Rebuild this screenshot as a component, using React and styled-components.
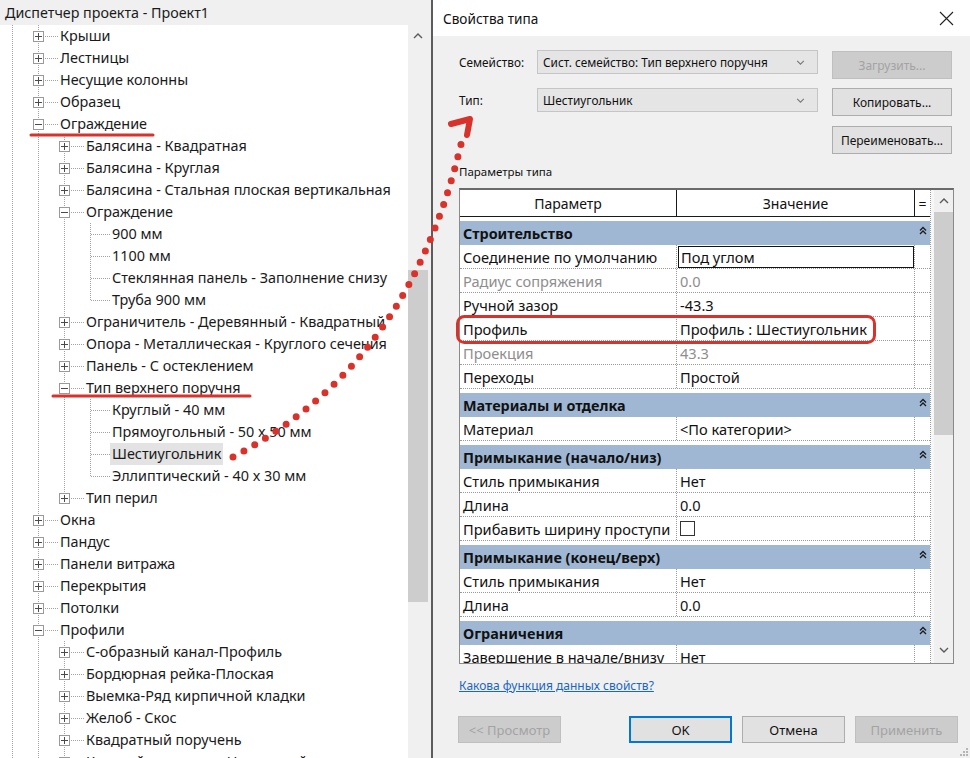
import React from 'react';
import styled, { createGlobalStyle } from 'styled-components';

const UI_FONT = '"Noto Sans", "Liberation Sans", sans-serif';
const RED = '#d8322a';

const GlobalStyle = createGlobalStyle`
  html, body { margin: 0; padding: 0; }
  body {
    width: 970px;
    height: 758px;
    overflow: hidden;
    background: #f0f0f0;
    font-family: ${UI_FONT};
    color: #000;
  }
`;

const Screen = styled.div`
  position: relative;
  display: flex;
  width: 970px;
  height: 758px;
  overflow: hidden;
`;

/* ---------- project browser (left) ---------- */

const Browser = styled.section`
  width: 431px;
  flex: none;
  display: flex;
  flex-direction: column;
  background: #f0f0f0;
`;

const BrowserTitle = styled.div`
  height: 25px;
  padding: 1px 0 0 5px;
  box-sizing: border-box;
  font-size: 14.3px;
  line-height: 24px;
  color: #1b1b1b;
  white-space: nowrap;
`;

const BrowserBody = styled.div`
  flex: 1;
  display: flex;
  min-height: 0;
`;

const Tree = styled.div`
  width: 408px;
  flex: none;
  background: #fff;
  overflow: hidden;
`;

const dotV = (x, h) =>
  `repeating-linear-gradient(to bottom, #a2a2a2 0 1px, transparent 1px 2px) ${x}px 0 / 1px ${h} no-repeat`;
const dotH = (x, y, w) =>
  `repeating-linear-gradient(to right, #a2a2a2 0 1px, transparent 1px 2px) ${x}px ${y}px / ${w}px 1px no-repeat`;

const Row = styled.div`
  display: flex;
  height: 22px;
  white-space: nowrap;
`;

const Guide = styled.div`
  width: 26px;
  flex: none;
  background: ${dotV(12, '100%')};
`;

const Connector = styled.div`
  width: 32px;
  flex: none;
  display: flex;
  align-items: center;
  background: ${({ $last }) => dotV(12, $last ? '11px' : '100%')},
    ${dotH(13, 11, 19)};
`;

const ExpBox = styled.div`
  width: 11px;
  height: 11px;
  margin-left: 7px;
  box-sizing: border-box;
  border: 1px solid #9a9a9a;
  background: #fff;
  display: flex;

  svg { display: block; }
`;

const Label = styled.span`
  padding: 0 2px;
  font-size: 14.4px;
  line-height: 22px;
  color: #1a1a1a;
  background: ${({ $selected }) => ($selected ? '#e3e3e3' : 'transparent')};
`;

const VScroll = styled.div`
  width: ${({ $w }) => $w}px;
  flex: none;
  display: flex;
  flex-direction: column;
  align-items: center;
  background: #f0f0f0;
`;

const ArrowCell = styled.div`
  height: ${({ $h }) => $h}px;
  width: 100%;
  flex: none;
  display: flex;
  align-items: center;
  justify-content: center;
`;

const Thumb = styled.div`
  width: ${({ $w }) => $w}px;
  background: #cdcdcd;
  flex: none;
`;

const Spacer = styled.div`
  flex: 1;
`;

/* ---------- type properties dialog (right) ---------- */

const Dialog = styled.section`
  flex: 1;
  display: flex;
  flex-direction: column;
  border-left: 2px solid #5c5c5c;
  background: #f0f0f0;
  font-size: 12px;
`;

const TitleBar = styled.div`
  height: 36px;
  flex: none;
  background: #fff;
  display: flex;
  align-items: center;
  justify-content: space-between;
  padding: 0 16px 0 10px;
  font-size: 13.6px;
  color: #111;
`;

const FormGrid = styled.div`
  display: grid;
  grid-template-columns: 64px 281px 120px;
  grid-auto-rows: 28px;
  column-gap: 14px;
  row-gap: 10px;
  margin: 14px 0 0 26px;
`;

const FieldLabel = styled.div`
  font-size: 11.8px;
  line-height: 24px;
  color: #111;
  white-space: nowrap;
`;

const Combo = styled.div`
  height: 24px;
  box-sizing: border-box;
  display: flex;
  align-items: center;
  justify-content: space-between;
  padding: 0 12px 0 5px;
  background: #e5e5e5;
  border: 1px solid #c5c5c5;
  font-size: 11.8px;
  color: #111;
  white-space: nowrap;
`;

const Button = styled.button`
  height: ${({ $h }) => $h || 28}px;
  width: ${({ $w }) => $w || 120}px;
  margin: 0;
  margin-top: ${({ $top }) => $top || 0}px;
  padding: 0;
  box-sizing: border-box;
  font-family: ${UI_FONT};
  font-size: ${({ $fs }) => $fs || 12}px;
  color: ${({ disabled }) => (disabled ? '#a3a3a3' : '#111')};
  background: ${({ disabled }) => (disabled ? '#cccccc' : '#e1e1e1')};
  border: ${({ disabled, $primary }) =>
    $primary ? '2px solid #0078d7' : disabled ? '1px solid #bfbfbf' : '1px solid #adadad'};
`;

const Caption = styled.div`
  margin: 10px 0 0 26px;
  font-size: 11.5px;
  line-height: 16px;
  color: #111;
`;

const Frame = styled.div`
  margin: 8px 0 0 26px;
  width: 495px;
  height: 476px;
  box-sizing: border-box;
  display: flex;
  border: 1px solid #8a8a8a;
  border-top: 2px solid #6a6a6a;
  background: #f7f7f7;
`;

const Table = styled.div`
  width: 471px;
  flex: none;
  overflow: hidden;
  background: #fff;
  border-right: 1px dotted #9a9a9a;
  box-sizing: border-box;
`;

const HeadRow = styled.div`
  display: grid;
  grid-template-columns: 217px 238px 15px;
  height: 27px;
  border-bottom: 1px solid #1a1a1a;
  box-sizing: border-box;
`;

const HeadCell = styled.div`
  display: flex;
  align-items: center;
  justify-content: center;
  font-size: 14px;
  color: #111;
  border-right: ${({ $noBorder }) => ($noBorder ? 'none' : '1px solid #1a1a1a')};
`;

const GroupRow = styled.div`
  height: 28px;
  padding-top: 4px;
  box-sizing: border-box;
`;

const GroupBand = styled.div`
  height: 24px;
  display: flex;
  align-items: center;
  justify-content: space-between;
  padding: 0 3px;
  background: #9fb7d3;
  font-size: 14.4px;
  font-weight: 700;
  color: #111;

  svg { align-self: flex-start; margin-top: 5px; }
`;

const DataRow = styled.div`
  display: grid;
  grid-template-columns: 217px 238px 15px;
  height: 24px;
  box-sizing: border-box;
  border-bottom: 1px dotted #9a9a9a;
`;

const Cell = styled.div`
  display: flex;
  align-items: center;
  padding-left: 3px;
  font-size: 14.6px;
  white-space: nowrap;
  overflow: hidden;
  color: ${({ $muted }) => ($muted ? '#8e8e8e' : '#111')};
  border-right: ${({ $noBorder }) => ($noBorder ? 'none' : '1px dotted #9a9a9a')};
`;

const EditBox = styled.div`
  flex: 1;
  align-self: stretch;
  margin: 1px 0 0 -2px;
  padding-left: 2px;
  display: flex;
  align-items: center;
  border: 1px solid #111;
  background: #fff;
`;

const CheckBox = styled.div`
  width: 15px;
  height: 15px;
  box-sizing: border-box;
  border: 1px solid #333;
  background: #fff;
`;

const HelpLink = styled.a`
  margin: 14px 0 0 26px;
  font-size: 12px;
  line-height: 16px;
  color: #1a66c2;
  text-decoration: underline;
`;

const ButtonBar = styled.div`
  display: flex;
  gap: 10px;
  margin: 22px 0 0 25px;

  & > button:first-child { margin-right: 58px; }
`;

const Grip = styled.div`
  display: flex;
  justify-content: flex-end;
  padding-right: 2px;
  margin-top: 3px;
`;

const Overlay = styled.svg`
  position: absolute;
  left: 0;
  top: 0;
  pointer-events: none;
`;

/* ---------- data ---------- */

const treeItems = [
  { level: 1, type: 'plus', text: 'Крыши' },
  { level: 1, type: 'plus', text: 'Лестницы' },
  { level: 1, type: 'plus', text: 'Несущие колонны' },
  { level: 1, type: 'plus', text: 'Образец' },
  { level: 1, type: 'minus', text: 'Ограждение' },
  { level: 2, type: 'plus', text: 'Балясина - Квадратная' },
  { level: 2, type: 'plus', text: 'Балясина - Круглая' },
  { level: 2, type: 'plus', text: 'Балясина - Стальная плоская вертикальная' },
  { level: 2, type: 'minus', text: 'Ограждение' },
  { level: 3, type: 'leaf', text: '900 мм' },
  { level: 3, type: 'leaf', text: '1100 мм' },
  { level: 3, type: 'leaf', text: 'Стеклянная панель - Заполнение снизу' },
  { level: 3, type: 'leaf', text: 'Труба 900 мм', last: true },
  { level: 2, type: 'plus', text: 'Ограничитель - Деревянный - Квадратный' },
  { level: 2, type: 'plus', text: 'Опора - Металлическая - Круглого сечения' },
  { level: 2, type: 'plus', text: 'Панель - С остеклением' },
  { level: 2, type: 'minus', text: 'Тип верхнего поручня' },
  { level: 3, type: 'leaf', text: 'Круглый - 40 мм' },
  { level: 3, type: 'leaf', text: 'Прямоугольный - 50 x 50 мм' },
  { level: 3, type: 'leaf', text: 'Шестиугольник', selected: true },
  { level: 3, type: 'leaf', text: 'Эллиптический - 40 x 30 мм', last: true },
  { level: 2, type: 'plus', text: 'Тип перил', last: true },
  { level: 1, type: 'plus', text: 'Окна' },
  { level: 1, type: 'plus', text: 'Пандус' },
  { level: 1, type: 'plus', text: 'Панели витража' },
  { level: 1, type: 'plus', text: 'Перекрытия' },
  { level: 1, type: 'plus', text: 'Потолки' },
  { level: 1, type: 'minus', text: 'Профили' },
  { level: 2, type: 'plus', text: 'С-образный канал-Профиль' },
  { level: 2, type: 'plus', text: 'Бордюрная рейка-Плоская' },
  { level: 2, type: 'plus', text: 'Выемка-Ряд кирпичной кладки' },
  { level: 2, type: 'plus', text: 'Желоб - Скос' },
  { level: 2, type: 'plus', text: 'Квадратный поручень' },
  { level: 2, type: 'plus', text: 'Круглый поручень - Наклонный' },
];

const properties = [
  { group: 'Строительство' },
  { name: 'Соединение по умолчанию', value: 'Под углом', editing: true },
  { name: 'Радиус сопряжения', value: '0.0', muted: true },
  { name: 'Ручной зазор', value: '-43.3' },
  { name: 'Профиль', value: 'Профиль : Шестиугольник' },
  { name: 'Проекция', value: '43.3', muted: true },
  { name: 'Переходы', value: 'Простой' },
  { group: 'Материалы и отделка' },
  { name: 'Материал', value: '<По категории>' },
  { group: 'Примыкание (начало/низ)' },
  { name: 'Стиль примыкания', value: 'Нет' },
  { name: 'Длина', value: '0.0' },
  { name: 'Прибавить ширину проступи', checkbox: true },
  { group: 'Примыкание (конец/верх)' },
  { name: 'Стиль примыкания', value: 'Нет' },
  { name: 'Длина', value: '0.0' },
  { group: 'Ограничения' },
  { name: 'Завершение в начале/внизу', value: 'Нет' },
];

/* ---------- small drawings ---------- */

const Chevron = ({ up, color = '#5a5a5a', w = 10, h = 6 }) => (
  <svg width={w} height={h} viewBox="0 0 10 6">
    <path
      d={up ? 'M1 5 5 1 9 5' : 'M1 1 5 5 9 1'}
      fill="none"
      stroke={color}
      strokeWidth="1.4"
    />
  </svg>
);

const DoubleUp = () => (
  <svg width="8" height="9" viewBox="0 0 8 9">
    <path d="M1 4.5 4 1.5 7 4.5M1 8 4 5 7 8" fill="none" stroke="#1a1a1a" strokeWidth="1.3" />
  </svg>
);

const CloseIcon = () => (
  <svg width="15" height="15" viewBox="0 0 15 15">
    <path d="M1 1 14 14M14 1 1 14" stroke="#222" strokeWidth="1.1" />
  </svg>
);

const Expander = ({ open }) => (
  <ExpBox>
    <svg width="9" height="9" viewBox="0 0 9 9">
      <path d={open ? 'M1 4.5h7' : 'M1 4.5h7M4.5 1v7'} stroke="#4a4a4a" strokeWidth="1" />
    </svg>
  </ExpBox>
);

const TreeRow = ({ item }) => (
  <Row>
    {Array.from({ length: item.level }).map((_, i) => (
      <Guide key={i} />
    ))}
    <Connector $last={item.last}>
      {item.type !== 'leaf' && <Expander open={item.type === 'minus'} />}
    </Connector>
    <Label $selected={item.selected}>{item.text}</Label>
  </Row>
);

const PropertyRow = ({ row }) => {
  if (row.group) {
    return (
      <GroupRow>
        <GroupBand>
          {row.group}
          <DoubleUp />
        </GroupBand>
      </GroupRow>
    );
  }
  return (
    <DataRow>
      <Cell $muted={row.muted}>{row.name}</Cell>
      <Cell $muted={row.muted}>
        {row.editing ? <EditBox>{row.value}</EditBox> : row.checkbox ? <CheckBox /> : row.value}
      </Cell>
      <Cell $noBorder />
    </DataRow>
  );
};

const Annotations = () => (
  <Overlay width="970" height="758" viewBox="0 0 970 758">
    <g stroke={RED} fill="none" strokeLinecap="round" strokeLinejoin="round">
      <path d="M31 135 H153" strokeWidth="3" />
      <path d="M53 396 H250" strokeWidth="3" />
      <rect x="457.5" y="316.5" width="417" height="26" rx="7" strokeWidth="3" />
      <path
        d="M233 457 C330 405 420 320 462 140"
        strokeWidth="7"
        strokeDasharray="0 12.5"
      />
      <path d="M451 124 L470 119 L467 135" strokeWidth="6" />
    </g>
  </Overlay>
);

export default function App() {
  return (
    <>
      <GlobalStyle />
      <Screen>
        <Browser>
          <BrowserTitle>Диспетчер проекта - Проект1</BrowserTitle>
          <BrowserBody>
            <Tree>
              {treeItems.map((item, i) => (
                <TreeRow key={i} item={item} />
              ))}
            </Tree>
            <VScroll $w={20}>
              <ArrowCell $h={21}>
                <Chevron up />
              </ArrowCell>
              <Thumb $w={20} style={{ marginTop: 224, height: 332 }} />
            </VScroll>
          </BrowserBody>
        </Browser>

        <Dialog>
          <TitleBar>
            Свойства типа
            <CloseIcon />
          </TitleBar>

          <FormGrid>
            <FieldLabel>Семейство:</FieldLabel>
            <Combo>
              Сист. семейство: Тип верхнего поручня
              <Chevron color="#7a7a7a" w={9} h={5} />
            </Combo>
            <Button disabled $top={1}>Загрузить...</Button>

            <FieldLabel>Тип:</FieldLabel>
            <Combo>
              Шестиугольник
              <Chevron color="#7a7a7a" w={9} h={5} />
            </Combo>
            <Button>Копировать...</Button>

            <div />
            <div />
            <Button>Переименовать...</Button>
          </FormGrid>

          <Caption>Параметры типа</Caption>

          <Frame>
            <Table>
              <HeadRow>
                <HeadCell>Параметр</HeadCell>
                <HeadCell>Значение</HeadCell>
                <HeadCell $noBorder>=</HeadCell>
              </HeadRow>
              {properties.map((row, i) => (
                <PropertyRow key={i} row={row} />
              ))}
            </Table>
            <Spacer />
            <VScroll $w={19}>
              <ArrowCell $h={22}>
                <Chevron up />
              </ArrowCell>
              <Thumb $w={19} style={{ height: 223 }} />
              <Spacer />
              <ArrowCell $h={26}>
                <Chevron />
              </ArrowCell>
            </VScroll>
          </Frame>

          <HelpLink href="#">Какова функция данных свойств?</HelpLink>

          <ButtonBar>
            <Button disabled $w={103} $h={27} $fs={13}>&lt;&lt; Просмотр</Button>
            <Button $primary $w={103} $h={27} $fs={13}>OK</Button>
            <Button $w={103} $h={27} $fs={13}>Отмена</Button>
            <Button disabled $w={103} $h={27} $fs={13}>Применить</Button>
          </ButtonBar>

          <Grip>
            <svg width="10" height="10" viewBox="0 0 10 10">
              <g fill="#b5b5b5">
                <rect x="8" y="2" width="2" height="2" />
                <rect x="5" y="5" width="2" height="2" />
                <rect x="8" y="5" width="2" height="2" />
                <rect x="2" y="8" width="2" height="2" />
                <rect x="5" y="8" width="2" height="2" />
                <rect x="8" y="8" width="2" height="2" />
              </g>
            </svg>
          </Grip>
        </Dialog>

        <Annotations />
      </Screen>
    </>
  );
}
